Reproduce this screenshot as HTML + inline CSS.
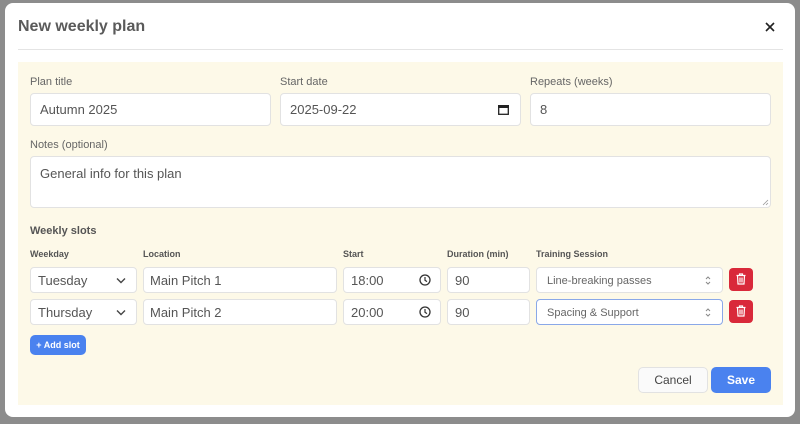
<!DOCTYPE html>
<html><head><meta charset="utf-8"><style>
*{box-sizing:border-box;margin:0;padding:0}
body{width:800px;height:424px;background:#8c8c8c;font-family:"Liberation Sans",sans-serif;position:relative;overflow:hidden}
.modal{position:absolute;left:5px;top:3px;width:790px;height:414px;background:#fff;border-radius:8px}
.abs{position:absolute}
h1{position:absolute;left:18px;top:18px;font-size:16px;font-weight:bold;color:#5a5a5a}
.hr{position:absolute;left:18px;top:49px;width:765px;height:1px;background:#e4e4e4}
.panel{position:absolute;left:18px;top:62px;width:765px;height:343px;background:#fdf9e8}
.lbl{position:absolute;font-size:11px;color:#666}
.in{position:absolute;background:#fff;border:1px solid #e2e2e2;border-radius:4px;font-size:13px;color:#555;padding-left:9px;display:flex;align-items:center}
.hd{position:absolute;font-size:9px;font-weight:bold;color:#555}
.del{position:absolute;width:24px;height:23px;background:#d9293a;border-radius:4px}
.btn{position:absolute;border-radius:5px;font-size:12px;display:flex;align-items:center;justify-content:center}
.sel{font-size:11px;padding-left:10px;color:#666;padding-top:2px}
</style></head><body>
<div class="modal"></div>
<h1>New weekly plan</h1>
<svg class="abs" style="left:765px;top:22px" width="10" height="10" viewBox="0 0 10 10"><path d="M1 1L9 9M9 1L1 9" stroke="#222" stroke-width="1.6"/></svg>
<div class="hr"></div>
<div class="panel"></div>
<div class="lbl" style="left:30px;top:76px">Plan title</div>
<div class="lbl" style="left:280px;top:76px">Start date</div>
<div class="lbl" style="left:530px;top:76px">Repeats (weeks)</div>
<div class="in" style="left:30px;top:93px;width:241px;height:33px">Autumn 2025</div>
<div class="in" style="left:280px;top:93px;width:241px;height:33px">2025-09-22
<svg class="abs" style="left:217px;top:11px" width="11" height="10" viewBox="0 0 11 10"><rect x="0.7" y="0.7" width="9.6" height="8.6" fill="none" stroke="#222" stroke-width="1.3"/><rect x="0" y="0" width="11" height="3" fill="#222"/></svg></div>
<div class="in" style="left:530px;top:93px;width:241px;height:33px">8</div>
<div class="lbl" style="left:30px;top:139px">Notes (optional)</div>
<div class="in" style="left:30px;top:156px;width:741px;height:52px;align-items:flex-start;padding-top:9px">General info for this plan
<svg class="abs" style="left:731px;top:42px" width="7" height="7"><path d="M1 6L6 1M4 6L6 4" stroke="#999" stroke-width="0.8"/></svg></div>
<div class="lbl" style="left:30px;top:225px;font-weight:bold;font-size:11px;color:#555">Weekly slots</div>
<div class="hd" style="left:30px;top:249px">Weekday</div>
<div class="hd" style="left:143px;top:249px">Location</div>
<div class="hd" style="left:343px;top:249px">Start</div>
<div class="hd" style="left:447px;top:249px">Duration (min)</div>
<div class="hd" style="left:536px;top:249px">Training Session</div>

<div class="in" style="left:30px;top:267px;width:107px;height:26px;padding-left:7px">Tuesday<svg class="abs" style="left:85px;top:9px" width="10" height="7"><path d="M1 1.5L5 5.5L9 1.5" fill="none" stroke="#444" stroke-width="1.4"/></svg></div>
<div class="in" style="left:143px;top:267px;width:194px;height:26px;padding-left:6px">Main Pitch 1</div>
<div class="in" style="left:343px;top:267px;width:98px;height:26px;padding-left:7px">18:00<svg class="abs" style="left:75px;top:6px" width="12" height="12" viewBox="0 0 12 12"><circle cx="6" cy="6" r="5" fill="none" stroke="#333" stroke-width="1.3"/><path d="M6 3V6.3L8 7.6" fill="none" stroke="#333" stroke-width="1.2"/></svg></div>
<div class="in" style="left:447px;top:267px;width:83px;height:26px;padding-left:7px">90</div>
<div class="in sel" style="left:536px;top:267px;width:187px;height:26px">Line-breaking passes<svg class="abs" style="left:168px;top:7px" width="6" height="11"><path d="M1 4L3 2L5 4M1 7L3 9L5 7" fill="none" stroke="#888" stroke-width="1"/></svg></div>
<div class="del" style="left:729px;top:268px"><svg class="abs" style="left:7px;top:5px" width="10" height="12" viewBox="0 0 10 12"><path d="M0.5 2.5H9.5M3.5 2.5V1H6.5V2.5M1.5 2.5L2 11H8L8.5 2.5M4 4.5V9.5M6 4.5V9.5" fill="none" stroke="#fff" stroke-width="1.2"/></svg></div>

<div class="in" style="left:30px;top:299px;width:107px;height:26px;padding-left:7px">Thursday<svg class="abs" style="left:85px;top:9px" width="10" height="7"><path d="M1 1.5L5 5.5L9 1.5" fill="none" stroke="#444" stroke-width="1.4"/></svg></div>
<div class="in" style="left:143px;top:299px;width:194px;height:26px;padding-left:6px">Main Pitch 2</div>
<div class="in" style="left:343px;top:299px;width:98px;height:26px;padding-left:7px">20:00<svg class="abs" style="left:75px;top:6px" width="12" height="12" viewBox="0 0 12 12"><circle cx="6" cy="6" r="5" fill="none" stroke="#333" stroke-width="1.3"/><path d="M6 3V6.3L8 7.6" fill="none" stroke="#333" stroke-width="1.2"/></svg></div>
<div class="in" style="left:447px;top:299px;width:83px;height:26px;padding-left:7px">90</div>
<div class="in sel" style="left:536px;top:299px;width:187px;height:26px;border:1px solid #8aa8e8">Spacing &amp; Support<svg class="abs" style="left:168px;top:7px" width="6" height="11"><path d="M1 4L3 2L5 4M1 7L3 9L5 7" fill="none" stroke="#888" stroke-width="1"/></svg></div>
<div class="del" style="left:729px;top:300px"><svg class="abs" style="left:7px;top:5px" width="10" height="12" viewBox="0 0 10 12"><path d="M0.5 2.5H9.5M3.5 2.5V1H6.5V2.5M1.5 2.5L2 11H8L8.5 2.5M4 4.5V9.5M6 4.5V9.5" fill="none" stroke="#fff" stroke-width="1.2"/></svg></div>

<div class="btn" style="left:30px;top:335px;width:56px;height:20px;background:#4a82ef;color:#fff;font-size:9px;font-weight:bold">+ Add slot</div>
<div class="btn" style="left:638px;top:367px;width:70px;height:26px;background:#fafafa;border:1px solid #e2e2e2;color:#444">Cancel</div>
<div class="btn" style="left:711px;top:367px;width:60px;height:26px;background:#4a82ef;color:#fff;font-weight:bold">Save</div>
</body></html>
